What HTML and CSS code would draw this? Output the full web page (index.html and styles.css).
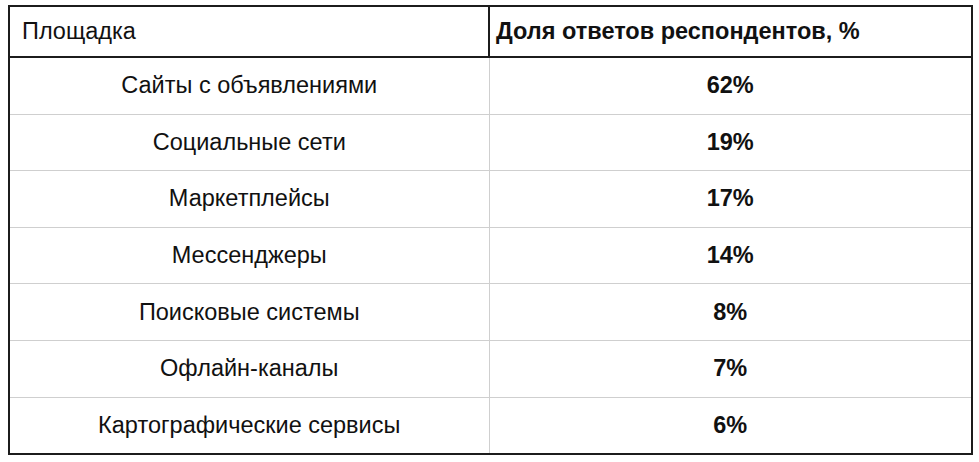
FILE: index.html
```html
<!DOCTYPE html>
<html lang="ru">
<head>
<meta charset="utf-8">
<link rel="stylesheet" href="styles.css">
</head>
<body>
<table class="data">
  <thead>
    <tr><th class="c1">Площадка</th><th class="c2">Доля ответов респондентов, %</th></tr>
  </thead>
  <tbody>
    <tr><td class="c1">Сайты с объявлениями</td><td class="c2">62%</td></tr>
    <tr><td class="c1">Социальные сети</td><td class="c2">19%</td></tr>
    <tr><td class="c1">Маркетплейсы</td><td class="c2">17%</td></tr>
    <tr><td class="c1">Мессенджеры</td><td class="c2">14%</td></tr>
    <tr><td class="c1">Поисковые системы</td><td class="c2">8%</td></tr>
    <tr><td class="c1">Офлайн-каналы</td><td class="c2">7%</td></tr>
    <tr><td class="c1">Картографические сервисы</td><td class="c2">6%</td></tr>
  </tbody>
</table>
</body>
</html>
```
FILE: styles.css
```css
html, body {
  margin: 0;
  background: #ffffff;
}
body {
  padding: 5px 0 0 8px;
  font-family: "Liberation Sans", Arial, sans-serif;
  color: #111;
}
.data {
  border-collapse: collapse;
  width: 965px;
  border: 2px solid #1c1c1c;
  table-layout: fixed;
}
.data th {
  height: 49px;
  border: 2px solid #1c1c1c;
  font-size: 23.5px;
  text-align: left;
  padding: 0 8px;
  vertical-align: middle;
}
.data th.c1 {
  width: 458px;
  font-weight: normal;
  padding-left: 12px;
}
.data th.c2 {
  font-weight: bold;
  padding-left: 6px;
}
.data td {
  height: 55.6px;
  border: 1px solid #cfcfcf;
  font-size: 23.5px;
  text-align: center;
  padding: 0;
  vertical-align: middle;
}
.data td.c2 {
  font-weight: bold;
}
```
